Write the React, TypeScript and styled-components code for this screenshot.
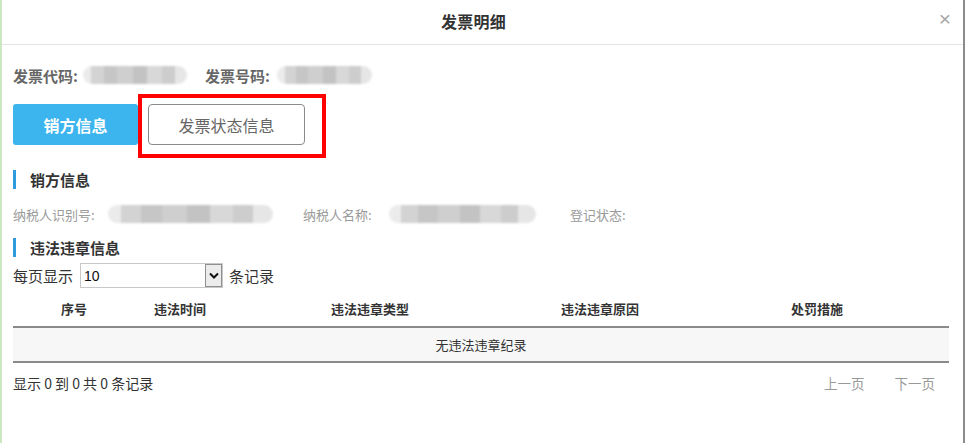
import React from 'react';
import styled, { createGlobalStyle } from 'styled-components';

const Global = createGlobalStyle`
  html, body { margin: 0; padding: 0; background: #fff; }
  body { font-family: "Noto Sans CJK SC", "Liberation Sans", sans-serif; }
  * { box-sizing: border-box; }
`;

const Dialog = styled.div`
  width: 965px;
  height: 443px;
  background: #fff;
  border-left: 2px solid #cbe8c3;
  border-right: 2px solid #8c8c8c;
  display: flex;
  flex-direction: column;
  overflow: hidden;
`;

const Header = styled.div`
  height: 45px;
  flex: none;
  border-bottom: 1px solid #e3e3e3;
  display: flex;
  align-items: center;
  justify-content: center;
  padding: 0 18px 2px 0;
  position: relative;
`;

const Title = styled.h1`
  margin: 0;
  font-size: 16px;
  font-weight: 700;
  color: #333;
  letter-spacing: 0.3px;
`;

const Close = styled.span`
  position: absolute;
  right: 12px;
  top: 7px;
  font-family: "Liberation Sans", sans-serif;
  font-size: 21px;
  color: #a5a5a5;
`;

const Body = styled.div`
  padding: 0 14px 0 11px;
  display: flex;
  flex-direction: column;
`;

const CodeRow = styled.div`
  margin-top: 19px;
  height: 22px;
  display: flex;
  align-items: center;
`;

const CodeLabel = styled.span`
  font-size: 15px;
  font-weight: 700;
  color: #666;
`;

const Blur = styled.span<{ $w: number; $ml?: number; $mr?: number }>`
  display: inline-block;
  width: ${p => p.$w}px;
  height: 18px;
  margin-left: ${p => p.$ml ?? 2}px;
  margin-right: ${p => p.$mr ?? 0}px;
  border-radius: 9px;
  filter: blur(1.2px);
  background: linear-gradient(
    90deg,
    #ebebeb 0 8%,
    #d3d3d3 8% 20%,
    #c6c6c6 20% 33%,
    #cfcfcf 33% 48%,
    #c3c3c3 48% 62%,
    #d8d8d8 62% 76%,
    #cdcdcd 76% 88%,
    #e6e6e6 88% 100%
  );
`;

const Tabs = styled.div`
  margin-top: 18px;
  display: flex;
  gap: 10px;
  align-items: center;
`;

const TabButton = styled.button<{ $active?: boolean; $w: number }>`
  width: ${p => p.$w}px;
  height: 41px;
  font-family: inherit;
  font-size: 16px;
  border-radius: ${p => (p.$active ? 3 : 4)}px;
  cursor: pointer;
  ${p =>
    p.$active
      ? `background:#3cb4ee;border:none;color:#fff;font-weight:700;`
      : `background:#fff;border:1px solid #8a8a8a;color:#666;font-weight:400;`}
`;

const Marked = styled.div`
  position: relative;
  display: flex;
`;

const RedMark = styled.span`
  position: absolute;
  left: -10px;
  right: -21px;
  top: -10px;
  bottom: -13px;
  border: 4px solid #f00;
  pointer-events: none;
`;

const SectionTitle = styled.div<{ $mt: number }>`
  margin-top: ${p => p.$mt}px;
  height: 19px;
  display: flex;
  align-items: center;
  border-left: 3px solid #2e9bdf;
  padding-left: 14px;
  font-size: 15px;
  font-weight: 700;
  color: #333;
`;

const FieldRow = styled.div`
  margin-top: 15px;
  height: 20px;
  display: flex;
  align-items: center;
`;

const Field = styled.div<{ $w: number }>`
  width: ${p => p.$w}px;
  display: flex;
  align-items: center;
  flex: none;
`;

const FieldLabel = styled.span`
  font-size: 13px;
  color: #9a9a9a;
`;

const LengthRow = styled.div`
  margin-top: 6px;
  display: flex;
  align-items: center;
  font-size: 15px;
  color: #333;
`;

const FakeSelect = styled.div`
  width: 143px;
  height: 25px;
  margin: 0 6px 0 7px;
  border: 1px solid #c8c8c8;
  display: flex;
  align-items: stretch;
  font-family: "Liberation Sans", sans-serif;
  font-size: 14px;
  color: #111;
`;

const SelectValue = styled.span`
  flex: 1;
  padding-left: 3px;
  display: flex;
  align-items: center;
`;

const SelectArrow = styled.span`
  width: 17px;
  background: #ececec;
  border: 1px solid #8f8f8f;
  display: flex;
  align-items: center;
  justify-content: center;
`;

const Table = styled.table`
  margin-top: 3px;
  width: 936px;
  border-collapse: collapse;
  table-layout: fixed;
  font-size: 13px;
  color: #333;
`;

const Th = styled.th<{ $w: number }>`
  width: ${p => p.$w}px;
  height: 36px;
  font-weight: 700;
  text-align: center;
  padding: 0;
  border-bottom: 2px solid #8a8a8a;
`;

const EmptyCell = styled.td`
  height: 35px;
  text-align: center;
  background: #f7f7f7;
  border-bottom: 2px solid #8a8a8a;
  padding: 0;
`;

const Footer = styled.div`
  margin-top: 10px;
  width: 936px;
  display: flex;
  justify-content: space-between;
  align-items: center;
  font-size: 14px;
  color: #333;
`;

const Pager = styled.div`
  display: flex;
  gap: 30px;
  padding-right: 14px;
`;

const PageLink = styled.span`
  color: #999;
  font-size: 13.5px;
`;

const columns = [
  { label: '序号', w: 122 },
  { label: '违法时间', w: 90 },
  { label: '违法违章类型', w: 290 },
  { label: '违法违章原因', w: 170 },
  { label: '处罚措施', w: 264 },
];

export default function App() {
  return (
    <>
      <Global />
      <Dialog>
        <Header>
          <Title>发票明细</Title>
          <Close>×</Close>
        </Header>
        <Body>
          <CodeRow>
            <CodeLabel>发票代码:</CodeLabel>
            <Blur $w={104} $ml={5} $mr={18} />
            <CodeLabel>发票号码:</CodeLabel>
            <Blur $w={95} $ml={7} />
          </CodeRow>
          <Tabs>
            <TabButton $active $w={125}>销方信息</TabButton>
            <Marked>
              <TabButton $w={157}>发票状态信息</TabButton>
              <RedMark />
            </Marked>
          </Tabs>
          <SectionTitle $mt={25}>销方信息</SectionTitle>
          <FieldRow>
            <Field $w={290}>
              <FieldLabel>纳税人识别号:</FieldLabel>
              <Blur $w={165} $ml={13} />
            </Field>
            <Field $w={267}>
              <FieldLabel>纳税人名称:</FieldLabel>
              <Blur $w={147} $ml={17} />
            </Field>
            <Field $w={100}>
              <FieldLabel>登记状态:</FieldLabel>
            </Field>
          </FieldRow>
          <SectionTitle $mt={14}>违法违章信息</SectionTitle>
          <LengthRow>
            每页显示
            <FakeSelect>
              <SelectValue>10</SelectValue>
              <SelectArrow>
                <svg width="10" height="7" viewBox="0 0 10 7">
                  <path d="M1 1.5 L5 5.5 L9 1.5" fill="none" stroke="#111" strokeWidth="2" />
                </svg>
              </SelectArrow>
            </FakeSelect>
            条记录
          </LengthRow>
          <Table>
            <thead>
              <tr>
                {columns.map(c => (
                  <Th key={c.label} $w={c.w}>{c.label}</Th>
                ))}
              </tr>
            </thead>
            <tbody>
              <tr>
                <EmptyCell colSpan={5}>无违法违章纪录</EmptyCell>
              </tr>
            </tbody>
          </Table>
          <Footer>
            <span>显示 0 到 0 共 0 条记录</span>
            <Pager>
              <PageLink>上一页</PageLink>
              <PageLink>下一页</PageLink>
            </Pager>
          </Footer>
        </Body>
      </Dialog>
    </>
  );
}
